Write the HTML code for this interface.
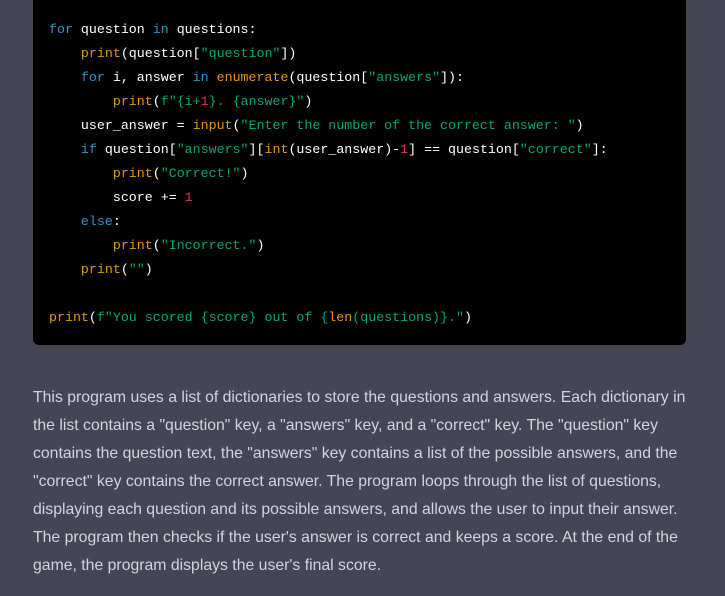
<!DOCTYPE html>
<html><head><meta charset="utf-8"><style>
html,body{margin:0;padding:0;width:725px;height:596px;overflow:hidden;background:#444654;}
.code{position:absolute;left:33px;top:0;width:653px;height:345px;background:#000;border-radius:0 0 6px 6px;}
pre{position:absolute;left:49px;top:18px;margin:0;font-family:"Liberation Mono",monospace;font-size:13.3px;line-height:24px;color:#fff;}
.k{color:#2e95d3}.f{color:#e9950c}.s{color:#00a67d}.n{color:#df3079}
.p{position:absolute;left:33px;top:384px;margin:0;font-family:"Liberation Sans",sans-serif;font-size:15.8px;line-height:28px;color:#d1d5db;white-space:nowrap;}
</style></head><body>
<div class="code"></div>
<pre><span class="k">for</span> question <span class="k">in</span> questions:
    <span class="f">print</span>(question[<span class="s">"question"</span>])
    <span class="k">for</span> i, answer <span class="k">in</span> <span class="f">enumerate</span>(question[<span class="s">"answers"</span>]):
        <span class="f">print</span>(<span class="s">f"{i+<span class="n">1</span>}. {answer}"</span>)
    user_answer = <span class="f">input</span>(<span class="s">"Enter the number of the correct answer: "</span>)
    <span class="k">if</span> question[<span class="s">"answers"</span>][<span class="f">int</span>(user_answer)-<span class="n">1</span>] == question[<span class="s">"correct"</span>]:
        <span class="f">print</span>(<span class="s">"Correct!"</span>)
        score += <span class="n">1</span>
    <span class="k">else</span>:
        <span class="f">print</span>(<span class="s">"Incorrect."</span>)
    <span class="f">print</span>(<span class="s">""</span>)

<span class="f">print</span>(<span class="s">f"You scored {score} out of {<span class="f">len</span>(questions)}."</span>)</pre>
<p class="p">This program uses a list of dictionaries to store the questions and answers. Each dictionary in<br>the list contains a "question" key, a "answers" key, and a "correct" key. The "question" key<br>contains the question text, the "answers" key contains a list of the possible answers, and the<br>"correct" key contains the correct answer. The program loops through the list of questions,<br>displaying each question and its possible answers, and allows the user to input their answer.<br>The program then checks if the user's answer is correct and keeps a score. At the end of the<br>game, the program displays the user's final score.</p>
</body></html>
